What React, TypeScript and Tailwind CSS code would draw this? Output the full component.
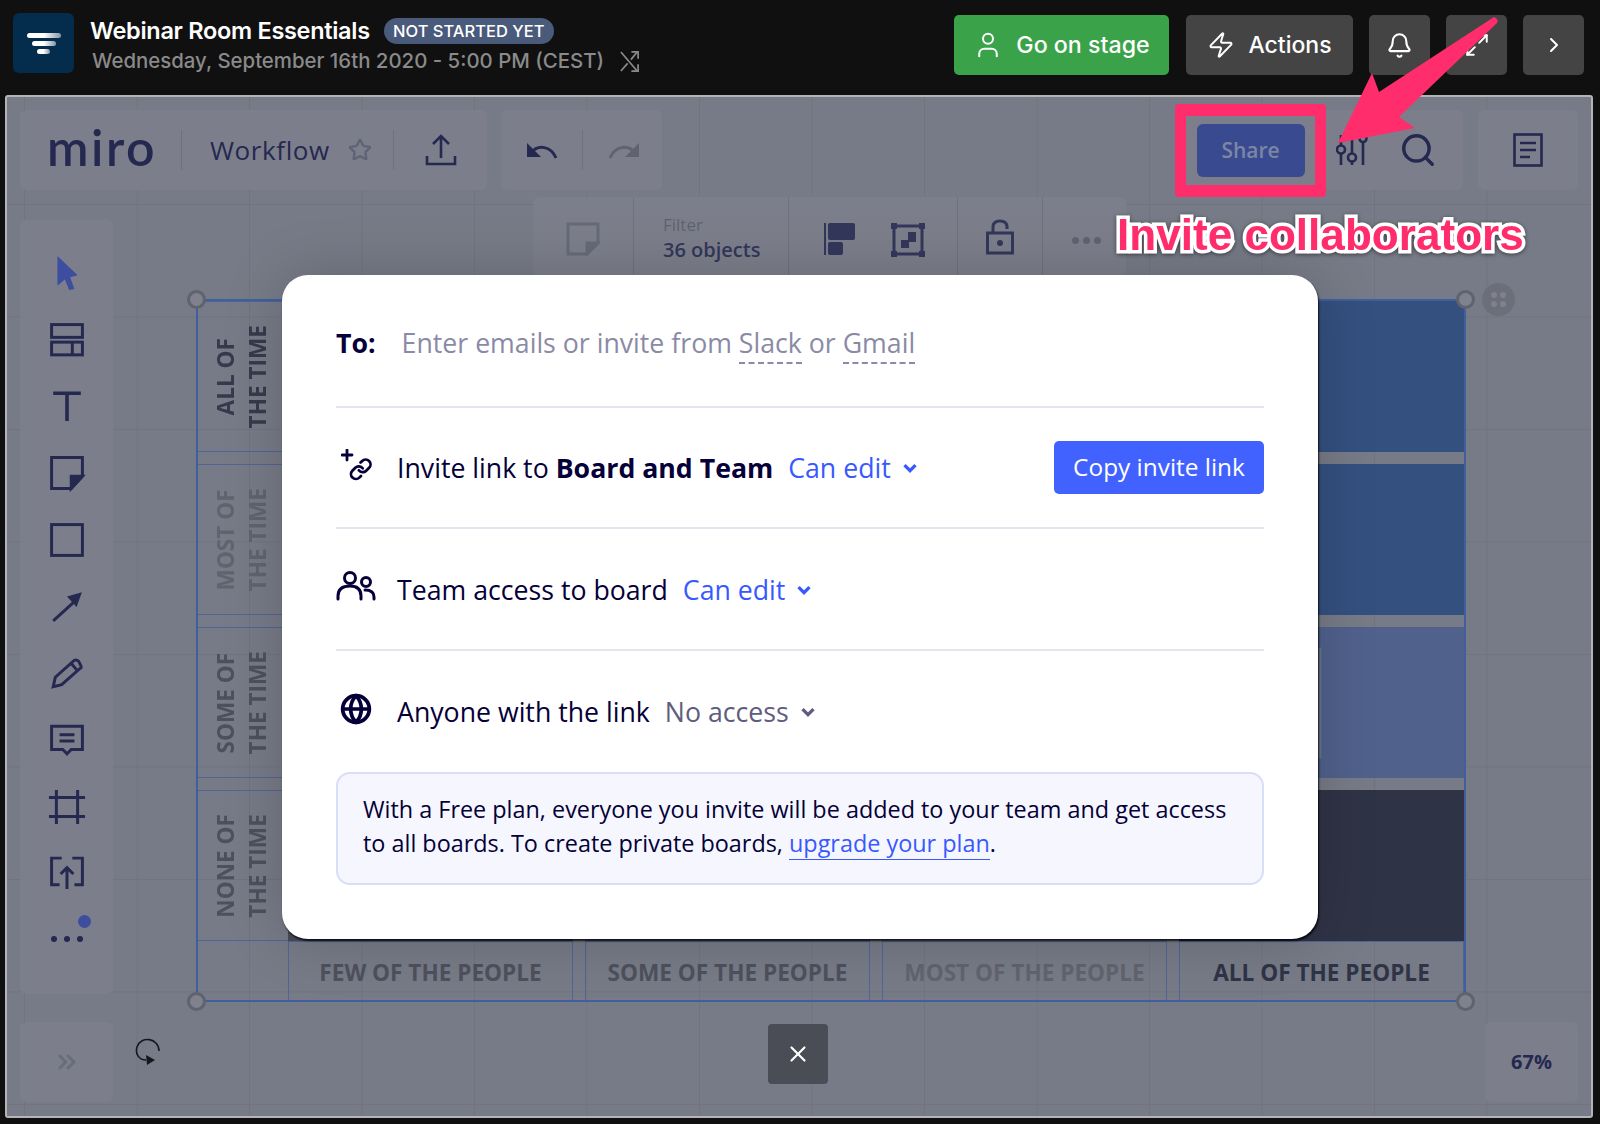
import { Bell, ChevronRight, ChevronsRight, Globe, Maximize2, Search, Star, User, X, Zap } from 'lucide-react';
import type { ReactNode } from 'react';

const rowLabels = [
  { first: 'ALL OF', color: 'text-[#363a4c]' },
  { first: 'MOST OF', color: 'text-[#61646f]' },
  { first: 'SOME OF', color: 'text-[#4e515d]' },
  { first: 'NONE OF', color: 'text-[#4e515d]' },
];

const cells = [
  'bg-[#505d80]', 'bg-[#46587f]', 'bg-[#34507f]', 'bg-[#34507f]',
  'bg-[#505d80]', 'bg-[#46587f]', 'bg-[#34507f]', 'bg-[#34507f]',
  'bg-[#505d80]', 'bg-[#46587f]', 'bg-[#505d80]', 'bg-[#50618c]',
  'bg-[#484b56]', 'bg-[#565965]', 'bg-[#6b6d78]', 'bg-[#2f3346]',
];

const columnLabels = [
  { text: 'FEW OF THE PEOPLE', color: 'text-[#4e515d]' },
  { text: 'SOME OF THE PEOPLE', color: 'text-[#4e515d]' },
  { text: 'MOST OF THE PEOPLE', color: 'text-[#61646f]' },
  { text: 'ALL OF THE PEOPLE', color: 'text-[#2f3346]' },
];

function Glyph({ className, children }: { className: string; children: ReactNode }) {
  return (
    <svg viewBox="0 0 32 32" fill="none" stroke="currentColor" strokeWidth="2.8" className={className}>
      {children}
    </svg>
  );
}

const toolIcons: ReactNode[] = [
  <path key="cursor" d="M7 0 L26 18 L19 20 L23 31 L18 32 L14 22 L7 28 Z" fill="#3d4e9e" stroke="none" />,
  <g key="templates">
    <rect x="1.5" y="1.5" width="29" height="12" />
    <rect x="1.5" y="18" width="29" height="12" />
    <path d="M21 18 V30" />
  </g>,
  <path key="text" d="M3 4 H29 M16 4 V30" strokeWidth="3.4" />,
  <g key="sticky">
    <path d="M1.5 1.5 H30.5 V19 L20 30.5 H1.5 Z" />
    <path d="M30.5 19 H20 V30.5 Z" fill="currentColor" />
  </g>,
  <rect key="shape" x="1.5" y="1.5" width="29" height="29" />,
  <g key="arrow">
    <path d="M3 30 L24 11" />
    <path d="M30 3 L16 7 L25 17 Z" fill="currentColor" stroke="none" />
  </g>,
  <path key="pen" d="M3 29 L5 20 L23 4 Q25 3 27 5 L29 9 Q30 11 28 12 L11 27 Z M20 7 L26 14" />,
  <g key="comment">
    <path d="M1.5 3 H30.5 V25 H20 L16 29 L12 25 H1.5 Z" />
    <path d="M9 11 H23 M9 17 H23" />
  </g>,
  <path key="frame" d="M-1 7 H33 M-1 25 H33 M6 0 V32 M26 0 V32" />,
  <g key="upload">
    <path d="M11 2 H1.5 V27 H9 M21 2 H30.5 V27 H23" />
    <path d="M16 31 V12 M10 17 L16 11 L22 17" />
  </g>,
];

function ToolPanel({ className, children }: { className: string; children: ReactNode }) {
  return <div className={`bg-[#7c7f8b] rounded-[6px] ${className}`}>{children}</div>;
}

function Handle({ className }: { className: string }) {
  return <div className={`absolute w-[19px] h-[19px] rounded-full border-[3px] border-[#5f636f] bg-[#7f828c] ${className}`} />;
}

function Chevron({ color }: { color: string }) {
  return (
    <svg viewBox="0 0 14 10" className={`w-[16px] h-[11px] ${color}`} fill="none" stroke="currentColor" strokeWidth="3">
      <path d="M2 2 L7 7 L12 2" />
    </svg>
  );
}

export default function App() {
  return (
    <div className="relative w-[1600px] h-[1124px] overflow-hidden bg-[#101010] flex flex-col font-['Inter',sans-serif]">
      {/* Webinar header */}
      <div className="h-[95px] shrink-0 flex items-start pl-[13px] pr-[16px] pt-[13px]">
        <div className="w-[61px] h-[60px] rounded-[6px] bg-[#042c4d] flex flex-col items-center justify-center gap-[3px]">
          <div className="w-[34px] h-[5px] rounded-full bg-gradient-to-r from-white via-white to-white/50" />
          <div className="w-[24px] h-[5px] rounded-full bg-gradient-to-r from-white via-white to-white/50" />
          <div className="w-[13px] h-[5px] rounded-full bg-gradient-to-r from-white via-white to-white/50" />
        </div>
        <div className="ml-[16px]">
          <div className="flex items-center h-[34px] mt-[1px]">
            <span className="text-white text-[23.5px] font-semibold tracking-[-0.3px]">Webinar Room Essentials</span>
            <span className="ml-[14px] h-[26px] w-[170px] rounded-full bg-[#4a5a7a] text-white text-[16.5px] font-medium flex items-center justify-center">
              NOT STARTED YET
            </span>
          </div>
          <div className="flex items-center mt-[-2px] ml-[2px]">
            <span className="text-[#8a8a8a] text-[20.4px] font-medium">Wednesday, September 16th 2020 - 5:00 PM (CEST)</span>
            <svg viewBox="0 0 22 24" className="w-[21px] h-[23px] ml-[15px] text-[#8a8a8a]" fill="none" stroke="currentColor" strokeWidth="1.8">
              <path d="M2 2 L19 22 M2 22 L9 14 M12.5 10 L19 2" />
              <path d="M13 2 H20 V9 M13 22 H20 V15" />
            </svg>
          </div>
        </div>
        <div className="ml-auto flex items-start gap-[16px] mt-[2px]">
          <button className="w-[215px] h-[60px] mr-[1px] rounded-[5px] bg-[#3aa34a] text-white text-[23.2px] font-medium flex items-center justify-center gap-[13px]">
            <User className="w-[30px] h-[30px]" strokeWidth={1.6} />
            Go on stage
          </button>
          <button className="w-[167px] h-[60px] rounded-[5px] bg-[#444444] text-white text-[23px] font-medium flex items-center justify-center gap-[13px]">
            <Zap className="w-[28px] h-[28px]" strokeWidth={1.7} />
            Actions
          </button>
          <button className="w-[61px] h-[60px] rounded-[5px] bg-[#444444] text-white flex items-center justify-center">
            <Bell className="w-[27px] h-[27px]" strokeWidth={1.8} />
          </button>
          <button className="w-[61px] h-[60px] rounded-[5px] bg-[#444444] text-white flex items-center justify-center">
            <Maximize2 className="w-[26px] h-[26px]" strokeWidth={1.8} />
          </button>
          <button className="w-[61px] h-[60px] rounded-[5px] bg-[#444444] text-white flex items-center justify-center">
            <ChevronRight className="w-[24px] h-[24px]" strokeWidth={2} />
          </button>
        </div>
      </div>

      {/* Embedded board */}
      <div className="relative ml-[5px] mr-[7px] h-[1023px] shrink-0 rounded-[3px] border-2 border-[#b4b4b4] overflow-hidden bg-[#777b87] bg-[linear-gradient(to_right,#71747f_1px,transparent_1px),linear-gradient(to_bottom,#71747f_1px,transparent_1px)] [background-size:112.5px_112.5px] [background-position:17px_107px] font-['Open_Sans',sans-serif] text-[#25284f]">
        {/* Matrix on the canvas */}
        <div className="absolute left-[189px] top-[202px] w-[1270px] h-[703px] border-2 border-[#3f5f9f] flex">
          <div className="w-[90px] flex flex-col gap-[12px]">
            {rowLabels.map((row) => (
              <div key={row.first} className={`h-[151px] border-y border-[#4f6597] flex items-center justify-center text-[22.6px] font-bold leading-[32px] ${row.color}`}>
                <div className="[writing-mode:vertical-rl] rotate-180 text-center whitespace-nowrap -ml-[3px]">
                  {row.first}
                  <br />
                  THE TIME
                </div>
              </div>
            ))}
          </div>
          <div className="w-[1176px] flex flex-col">
            <div className="grid grid-cols-4 gap-x-[12px] gap-y-[12px]">
              {cells.map((color, i) => (
                <div key={i} className={`h-[151px] ${color}`} />
              ))}
            </div>
            <div className="grid grid-cols-4 gap-x-[12px] flex-1">
              {columnLabels.map((col) => (
                <div key={col.text} className={`border-x border-t border-[#4f6597] pt-[3px] flex items-center justify-center text-[22.6px] font-bold ${col.color}`}>
                  {col.text}
                </div>
              ))}
            </div>
          </div>
        </div>
        <Handle className="left-[180px] top-[193px]" />
        <Handle className="left-[1449px] top-[193px]" />
        <Handle className="left-[180px] top-[895px]" />
        <Handle className="left-[1449px] top-[895px]" />
        <div className="absolute left-[1475px] top-[186px] w-[33px] h-[33px] rounded-full bg-[#6c6f7a] grid grid-cols-2 gap-[3px] p-[9px]">
          <div className="rounded-full bg-[#7f828d]" />
          <div className="rounded-full bg-[#7f828d]" />
          <div className="rounded-full bg-[#7f828d]" />
          <div className="rounded-full bg-[#7f828d]" />
        </div>
        <div className="absolute left-[1300px] top-[550px] w-[15px] h-[112px] border border-[#4a6aa5] bg-[#74777f]" />

        {/* Floating toolbars */}
        <div className="absolute inset-0 flex flex-col px-[13px] pt-[13px] pb-[14px]">
          <div className="flex items-start h-[80px]">
            <ToolPanel className="w-[467px] h-[80px] flex items-center">
              <span className="ml-[27px] w-[110px] text-[50px] leading-none font-['Lato',sans-serif] font-semibold tracking-[2.5px] mt-[-6px]">miro</span>
              <div className="ml-[24px] w-px h-[40px] bg-[#6d707d]" />
              <span className="ml-[28px] text-[26px] tracking-[0.6px]">Workflow</span>
              <Star className="ml-[18px] w-[24px] h-[24px] text-[#5f6378]" strokeWidth={2.4} />
              <div className="ml-[21px] w-px h-[40px] bg-[#6d707d]" />
              <svg viewBox="0 0 32 32" className="ml-[31px] w-[32px] h-[32px]" fill="none" stroke="currentColor" strokeWidth="2.6">
                <path d="M16 24 V2 M8 10 L16 2 L24 10 M2 22 V30 H30 V22" />
              </svg>
            </ToolPanel>
            <ToolPanel className="ml-[14px] w-[161px] h-[80px] flex items-center">
              <svg viewBox="0 0 32 24" className="ml-[25px] w-[32px] h-[24px]" fill="none" stroke="currentColor" strokeWidth="3">
                <path d="M30 20 C25 8 12 6 5 15" />
                <path d="M1 5 V19 H15 Z" fill="currentColor" stroke="none" />
              </svg>
              <div className="ml-[24px] w-px h-[40px] bg-[#6d707d]" />
              <svg viewBox="0 0 32 24" className="ml-[25px] w-[32px] h-[24px] text-[#60636f]" fill="none" stroke="currentColor" strokeWidth="3">
                <path d="M2 20 C7 8 20 6 27 15" />
                <path d="M31 5 V19 H17 Z" fill="currentColor" stroke="none" />
              </svg>
            </ToolPanel>
            <ToolPanel className="ml-auto w-[280px] h-[80px] flex items-center pl-[153px]">
              <svg viewBox="0 0 32 32" className="w-[32px] h-[32px]" fill="none" stroke="currentColor" strokeWidth="2.6">
                <path d="M5 1 V11 M5 20 V31 M16 1 V19 M16 28 V31 M27 8 V31" />
                <circle cx="5" cy="15.5" r="4" />
                <circle cx="16" cy="23.5" r="4" />
                <circle cx="27" cy="4.5" r="3.5" />
              </svg>
              <Search className="ml-[31px] w-[38px] h-[38px]" strokeWidth={2.2} />
            </ToolPanel>
            <ToolPanel className="ml-[15px] w-[100px] h-[80px] flex items-center justify-center">
              <svg viewBox="0 0 30 34" className="w-[30px] h-[34px]" fill="none" stroke="currentColor" strokeWidth="2.6">
                <rect x="1.5" y="1.5" width="27" height="31" />
                <path d="M7 10 H23 M7 17 H23 M7 24 H17" />
              </svg>
            </ToolPanel>
          </div>

          <div className="flex flex-1 mt-[30px]">
            <ToolPanel className="w-[93px] h-[774px] flex flex-col items-center pt-[36px] gap-[32.7px] relative">
              {toolIcons.map((icon, i) => (
                <Glyph key={i} className="w-[34px] h-[34px] overflow-visible">{icon}</Glyph>
              ))}
              <div className="flex gap-[7px] mt-[13px]">
                <div className="w-[6px] h-[6px] rounded-full bg-[#25284f]" />
                <div className="w-[6px] h-[6px] rounded-full bg-[#25284f]" />
                <div className="w-[6px] h-[6px] rounded-full bg-[#25284f]" />
              </div>
              <div className="absolute left-[58px] top-[695px] w-[13px] h-[13px] rounded-full bg-[#3d4e9e]" />
            </ToolPanel>
            <div className="ml-[420px] h-[80px] w-[593px] -mt-[23px] bg-[#7c7f8b] rounded-[6px] flex">
              <div className="w-[101px] border-r border-[#6f727e] flex justify-center pt-[25px]">
                <svg viewBox="0 0 34 34" className="w-[34px] h-[34px] text-[#666a78]" fill="none" stroke="currentColor" strokeWidth="3">
                  <path d="M2 2 H32 V21 L21 32 H2 Z" />
                  <path d="M32 21 H21 V32 Z" fill="currentColor" />
                </svg>
              </div>
              <div className="w-[155px] border-r border-[#6f727e] pl-[29px] pt-[16px]">
                <div className="text-[#5f6370] text-[17px] leading-[24px]">Filter</div>
                <div className="text-[#33375a] text-[20px] font-semibold leading-[26px]">36 objects</div>
              </div>
              <div className="w-[169px] border-r border-[#6f727e] flex items-start gap-[35px] pl-[35px] pt-[26px] text-[#33375a]">
                <svg viewBox="0 0 32 32" className="w-[32px] h-[32px]" fill="currentColor">
                  <rect x="0" y="0" width="2" height="32" />
                  <rect x="4" y="0" width="27" height="17" rx="2" />
                  <rect x="4" y="19" width="15" height="13" rx="2" />
                </svg>
                <svg viewBox="0 0 34 34" className="w-[34px] h-[34px]" fill="none" stroke="currentColor" strokeWidth="3">
                  <rect x="3" y="3" width="28" height="28" />
                  <rect x="0" y="0" width="6" height="6" fill="currentColor" stroke="none" />
                  <rect x="28" y="0" width="6" height="6" fill="currentColor" stroke="none" />
                  <rect x="0" y="28" width="6" height="6" fill="currentColor" stroke="none" />
                  <rect x="28" y="28" width="6" height="6" fill="currentColor" stroke="none" />
                  <rect x="17" y="9" width="8" height="10" fill="currentColor" stroke="none" />
                  <rect x="10" y="17" width="8" height="8" fill="currentColor" stroke="none" />
                </svg>
              </div>
              <div className="w-[85px] border-r border-[#6f727e] flex justify-center pt-[22px] text-[#33375a]">
                <svg viewBox="0 0 28 36" className="w-[28px] h-[36px]" fill="none" stroke="currentColor" strokeWidth="3">
                  <rect x="1.5" y="14" width="25" height="20" />
                  <path d="M7 14 V8 Q7 2 14 2 Q21 2 21 8 V10" />
                  <circle cx="14" cy="24" r="3" fill="currentColor" stroke="none" />
                </svg>
              </div>
              <div className="flex-1 flex gap-[4px] pt-[40px] pl-[29px]">
                <div className="w-[7px] h-[7px] rounded-full bg-[#5f6372]" />
                <div className="w-[7px] h-[7px] rounded-full bg-[#5f6372]" />
                <div className="w-[7px] h-[7px] rounded-full bg-[#5f6372]" />
              </div>
            </div>
          </div>

          <div className="flex items-start h-[80px]">
            <ToolPanel className="w-[93px] h-[80px] flex items-center justify-center text-[#696c7a]">
              <ChevronsRight className="w-[28px] h-[28px]" strokeWidth={2.6} />
            </ToolPanel>
            <svg viewBox="0 0 26 30" className="ml-[22px] mt-[14px] w-[26px] h-[30px] text-[#17181f]" fill="none" stroke="currentColor" strokeWidth="1.6">
              <path d="M24 15 C24 2 6 -1 2 11 C0 18 4 24 11 24" />
              <path d="M11 19 L20 24 L12 29 Z" fill="currentColor" stroke="none" />
            </svg>
            <button className="ml-[607px] mt-[2px] w-[60px] h-[60px] rounded-[4px] bg-[#4a4d56] text-white flex items-center justify-center">
              <X className="w-[26px] h-[26px]" strokeWidth={2} />
            </button>
            <ToolPanel className="ml-auto w-[93px] h-[80px] flex items-center justify-center text-[20px] font-bold">
              67%
            </ToolPanel>
          </div>
        </div>

        {/* Share dialog */}
        <div className="absolute inset-0 flex items-center justify-center">
          <div className="w-[1036px] h-[664px] ml-[2px] rounded-[26px] bg-white px-[54px] shadow-[1px_2px_2px_rgba(0,0,0,0.8),0_0_60px_rgba(0,0,0,0.18)] text-[#050038] text-[26.7px] mt-[1px]">
            <div className="h-[133px] pt-[5px] border-b-2 border-[#e3e4ee] flex items-center">
              <span className="font-bold">To:</span>
              <span className="ml-[26px] text-[#8b8aa6]">
                Enter emails or invite from{' '}
                <span className="border-b-2 border-dashed border-[#8b8aa6] pb-px">Slack</span> or{' '}
                <span className="border-b-2 border-dashed border-[#8b8aa6] pb-px">Gmail</span>
              </span>
            </div>
            <div className="h-[121px] pt-[2px] border-b-2 border-[#e3e4ee] flex items-center">
              <svg viewBox="0 0 32 32" className="w-[32px] h-[32px] ml-[5px] mt-[-8px]" fill="none" stroke="currentColor" strokeWidth="2.8" strokeLinecap="round" strokeLinejoin="round">
                <path d="M1 6 H11 M6 1 V11" />
                <g transform="translate(8 8.5) scale(0.98)">
                  <path d="M10 13a5 5 0 0 0 7.54.54l3-3a5 5 0 0 0-7.07-7.07l-1.72 1.71" />
                  <path d="M14 11a5 5 0 0 0-7.54-.54l-3 3a5 5 0 0 0 7.07 7.07l1.71-1.71" />
                </g>
              </svg>
              <span className="ml-[24px]">Invite link to</span>
              <span className="ml-[7px] font-bold">Board and Team</span>
              <span className="ml-[15px] text-[#3859ff]">Can edit</span>
              <span className="ml-[11px]"><Chevron color="text-[#3859ff]" /></span>
              <button className="ml-auto w-[210px] h-[53px] mt-[-2px] rounded-[5px] bg-[#4262ff] text-white text-[24.4px]">Copy invite link</button>
            </div>
            <div className="h-[122px] pt-[2px] border-b-2 border-[#e3e4ee] flex items-center">
              <svg viewBox="0 0 40 30" className="w-[40px] h-[30px] mt-[-8px]" fill="none" stroke="currentColor" strokeWidth="3" strokeLinecap="round">
                <circle cx="14" cy="7" r="5.5" />
                <circle cx="30" cy="11" r="4.5" />
                <path d="M2 28 V25 Q2 15 14 15 Q25 15 25 25 V28" />
                <path d="M29 19 Q38 19 38 26 V28" />
              </svg>
              <span className="ml-[21px]">Team access to board</span>
              <span className="ml-[15px] text-[#3859ff]">Can edit</span>
              <span className="ml-[11px]"><Chevron color="text-[#3859ff]" /></span>
            </div>
            <div className="h-[121px] pt-[2px] flex items-center">
              <Globe className="w-[32px] h-[32px] ml-[4px] mt-[-8px]" strokeWidth={2.8} />
              <span className="ml-[25px]">Anyone with the link</span>
              <span className="ml-[15px] text-[#5f5c80]">No access</span>
              <span className="ml-[11px]"><Chevron color="text-[#5f5c80]" /></span>
            </div>
            <div className="h-[113px] rounded-[14px] border-2 border-[#d9def8] bg-[#f6f7fe] px-[25px] pt-[18px] text-[23.4px] leading-[34px] whitespace-nowrap">
              With a Free plan, everyone you invite will be added to your team and get access
              <br />
              to all boards. To create private boards,{' '}
              <span className="text-[#3859ff] border-b border-[#3859ff]">upgrade your plan</span>.
            </div>
          </div>
        </div>
      </div>

      {/* Tutorial annotations */}
      <div className="absolute left-[1175px] top-[104px] w-[151px] h-[93px] rounded-[4px] border-x-[11px] border-y-[12px] border-[#ff2d6c] flex items-center justify-center">
        <div className="w-[108px] h-[53px] rounded-[6px] bg-[#3a4a90] text-[#7c86a3] text-[21px] font-semibold font-['Open_Sans',sans-serif] flex items-center justify-center">
          Share
        </div>
      </div>
      <svg viewBox="0 0 1600 1124" className="absolute inset-0 w-[1600px] h-[1124px] pointer-events-none">
        <path d="M1338 143 L1372 73 L1379 92 L1494 17 Q1499 19 1497 23 L1399 117 L1415 128 Z" fill="#ff2d6c" />
      </svg>
      <div className="absolute left-[1117px] top-[205px] text-[44.1px] leading-[60px] font-bold font-['Liberation_Sans',sans-serif] text-[#ff2d6c] whitespace-nowrap [-webkit-text-stroke:7px_white] [paint-order:stroke_fill] drop-shadow-[0_1px_2px_rgba(0,0,0,0.5)]">
        Invite collaborators
      </div>
    </div>
  );
}
